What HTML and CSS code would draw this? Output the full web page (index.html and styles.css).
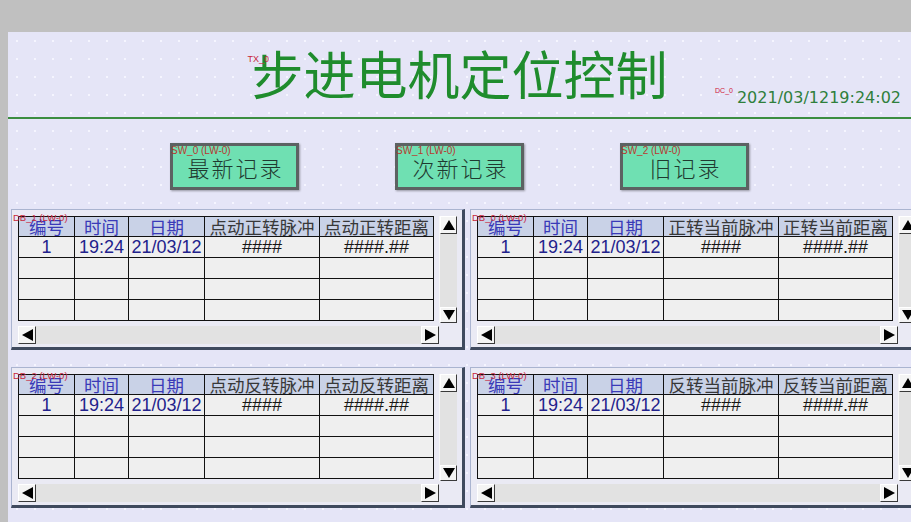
FILE: index.html
```html
<!DOCTYPE html>
<html lang="zh-CN">
<head>
	<meta charset="UTF-8">
	<title>步进电机定位控制</title>
	<link rel="stylesheet" href="styles.css">
</head>
<body>
	<div class="screen">
		<div class="head">
			<div></div>
			<h1 class="title"><span class="tag tx">TX_0</span>步进电机定位控制</h1>
			<div class="clock"><span class="tag dc">DC_0</span>2021/03/1219:24:02</div>
		</div>

		<div class="buttons">
			<button class="btn" type="button"><span class="tag sw">SW_0 (LW-0)</span>最新记录</button>
			<button class="btn" type="button"><span class="tag sw">SW_1 (LW-0)</span>次新记录</button>
			<button class="btn" type="button"><span class="tag sw">SW_2 (LW-0)</span>旧记录</button>
		</div>

		<div class="panels">
			<div class="panel">
				<span class="tag db">DB_1 (LW-0)</span>
				<table class="log">
					<tr class="hd"><td class="k">编号</td><td class="k">时间</td><td class="k">日期</td><td>点动正转脉冲</td><td>点动正转距离</td></tr>
					<tr><td class="k">1</td><td class="k">19:24</td><td class="k">21/03/12</td><td>####</td><td>####.##</td></tr>
					<tr><td></td><td></td><td></td><td></td><td></td></tr>
					<tr><td></td><td></td><td></td><td></td><td></td></tr>
					<tr><td></td><td></td><td></td><td></td><td></td></tr>
				</table>
				<div class="vscroll"><div class="sb up"></div><div class="sb down"></div></div>
				<div class="hscroll"><div class="sb left"></div><div class="sb right"></div></div>
			</div>

			<div class="panel">
				<span class="tag db">DB_0 (LW-0)</span>
				<table class="log">
					<tr class="hd"><td class="k">编号</td><td class="k">时间</td><td class="k">日期</td><td>正转当前脉冲</td><td>正转当前距离</td></tr>
					<tr><td class="k">1</td><td class="k">19:24</td><td class="k">21/03/12</td><td>####</td><td>####.##</td></tr>
					<tr><td></td><td></td><td></td><td></td><td></td></tr>
					<tr><td></td><td></td><td></td><td></td><td></td></tr>
					<tr><td></td><td></td><td></td><td></td><td></td></tr>
				</table>
				<div class="vscroll"><div class="sb up"></div><div class="sb down"></div></div>
				<div class="hscroll"><div class="sb left"></div><div class="sb right"></div></div>
			</div>

			<div class="panel">
				<span class="tag db">DB_2 (LW-0)</span>
				<table class="log">
					<tr class="hd"><td class="k">编号</td><td class="k">时间</td><td class="k">日期</td><td>点动反转脉冲</td><td>点动反转距离</td></tr>
					<tr><td class="k">1</td><td class="k">19:24</td><td class="k">21/03/12</td><td>####</td><td>####.##</td></tr>
					<tr><td></td><td></td><td></td><td></td><td></td></tr>
					<tr><td></td><td></td><td></td><td></td><td></td></tr>
					<tr><td></td><td></td><td></td><td></td><td></td></tr>
				</table>
				<div class="vscroll"><div class="sb up"></div><div class="sb down"></div></div>
				<div class="hscroll"><div class="sb left"></div><div class="sb right"></div></div>
			</div>

			<div class="panel">
				<span class="tag db">DB_3 (LW-0)</span>
				<table class="log">
					<tr class="hd"><td class="k">编号</td><td class="k">时间</td><td class="k">日期</td><td>反转当前脉冲</td><td>反转当前距离</td></tr>
					<tr><td class="k">1</td><td class="k">19:24</td><td class="k">21/03/12</td><td>####</td><td>####.##</td></tr>
					<tr><td></td><td></td><td></td><td></td><td></td></tr>
					<tr><td></td><td></td><td></td><td></td><td></td></tr>
					<tr><td></td><td></td><td></td><td></td><td></td></tr>
				</table>
				<div class="vscroll"><div class="sb up"></div><div class="sb down"></div></div>
				<div class="hscroll"><div class="sb left"></div><div class="sb right"></div></div>
			</div>
		</div>
	</div>
</body>
</html>
```

FILE: styles.css
```css
body{
	margin: 0;
	background: #c0c0c0;
	font-family: "Liberation Sans", Arial, "Noto Sans CJK SC", sans-serif;
}

.screen{
	margin: 32px 0 0 8px;
	height: 490px;
	overflow: hidden;
	background-color: #e5e5f7;
	background-image: radial-gradient(circle, #f5f5ff 1px, transparent 1.3px);
	background-size: 18px 18px;
}

/* small red object ids */
.tag{
	position: absolute;
	font-family: "Liberation Sans", Arial, sans-serif;
	font-weight: normal;
	letter-spacing: 0;
	white-space: nowrap;
	color: #c8283c;
	line-height: 1;
}

.head{
	height: 85px;
	border-bottom: 2px solid #3b8d40;
	display: grid;
	grid-template-columns: 1fr auto 1fr;
}

.title{
	position: relative;
	margin: 15px 0 0 0;
	font-family: "Noto Sans CJK SC", sans-serif;
	font-weight: 400;
	font-size: 52px;
	line-height: 52px;
	color: #1f8c2d;
	align-self: start;
}
.tx{
	left: -4px;
	top: 8px;
	font-size: 9px;
}

.clock{
	justify-self: end;
	align-self: start;
	margin-top: 57px;
	padding-right: 10px;
	font-family: "DejaVu Sans", sans-serif;
	font-size: 16px;
	line-height: 18px;
	color: #2f7f3c;
	display: flex;
	align-items: flex-start;
}
.dc{
	position: static;
	font-size: 7px;
	margin: -2px 4px 0 0;
	color: #d0203a;
}

.buttons{
	display: flex;
	gap: 96px;
	padding: 24px 0 0 162px;
	height: 47px;
	margin-bottom: 19px;
}
.btn{
	position: relative;
	width: 129px;
	height: 47px;
	box-sizing: border-box;
	background: #6fe0b2;
	border: 3px solid #5c6262;
	box-shadow: 1px 1px 2px rgba(0,0,0,0.35);
	font-family: "Noto Sans CJK SC", sans-serif;
	font-weight: 300;
	font-size: 22px;
	letter-spacing: 2px;
	padding: 0 0 0 2px;
	color: #1f3a30;
}
.sw{
	left: -2px;
	top: 0;
	font-size: 10px;
	color: #b83a30;
}

.panels{
	display: grid;
	grid-template-columns: 454px 454px;
	column-gap: 5px;
	row-gap: 17px;
	padding-left: 3px;
}
.panel{
	position: relative;
	box-sizing: border-box;
	width: 454px;
	height: 141px;
	background: #eaeaf4;
	border-top: 1px solid #aab4d0;
	border-left: 1px solid #aab4d0;
	border-right: 3px solid #3f4a5e;
	border-bottom: 3px solid #3f4a5e;
	padding: 6px 5px 3px 6px;
	display: grid;
	grid-template-columns: 421px 18px;
	grid-template-rows: 107px 18px;
	row-gap: 3px;
}
.db{
	left: 1px;
	top: 3px;
	font-size: 9.5px;
	z-index: 2;
}

.log{
	width: 416px;
	table-layout: fixed;
	border-collapse: collapse;
	align-self: start;
	background: #efefef;
}
.log td{
	border: 1px solid #111;
	padding: 0;
	height: 20px;
	text-align: center;
	font-size: 18px;
	line-height: 18px;
	color: #151515;
	white-space: nowrap;
}
.log td:nth-child(1){ width: 55px; }
.log td:nth-child(2){ width: 53px; }
.log td:nth-child(3){ width: 75px; }
.log td:nth-child(4){ width: 114px; }
.log .k{
	color: #22228c;
}
.log .hd td{
	height: 19px;
	background: #c9d2e7;
	font-family: "Noto Sans CJK SC", sans-serif;
	font-size: 17.5px;
	color: #383838;
}
.log .hd .k{
	color: #3a3ab8;
}

.vscroll, .hscroll{
	background: #e2e2e2;
	display: flex;
	justify-content: space-between;
}
.vscroll{
	flex-direction: column;
	border-left: 1px solid #f6f6f6;
	box-sizing: border-box;
}
.hscroll{
	width: 421px;
}

.sb{
	box-sizing: border-box;
	width: 18px;
	height: 18px;
	background: #f4f4f4;
	border: 1px solid;
	border-color: #ffffff #3a3a3a #3a3a3a #ffffff;
	display: flex;
	align-items: center;
	justify-content: center;
}
.vscroll .sb{
	width: 17px;
}
.vscroll .down{
	height: 16px;
}
.sb::before{
	content: "";
	width: 0;
	height: 0;
}
.up::before{
	border-left: 6px solid transparent;
	border-right: 6px solid transparent;
	border-bottom: 10px solid #000;
}
.down::before{
	border-left: 6px solid transparent;
	border-right: 6px solid transparent;
	border-top: 10px solid #000;
}
.left::before{
	border-top: 6px solid transparent;
	border-bottom: 6px solid transparent;
	border-right: 11px solid #000;
}
.right::before{
	border-top: 6px solid transparent;
	border-bottom: 6px solid transparent;
	border-left: 11px solid #000;
}
```
